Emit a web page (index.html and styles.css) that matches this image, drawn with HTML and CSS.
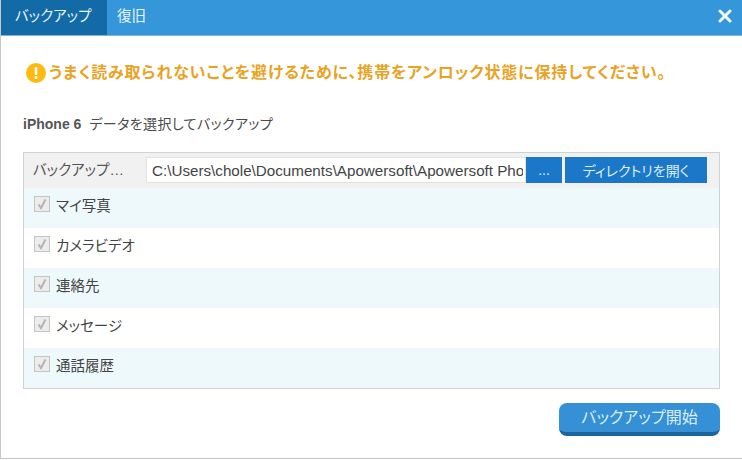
FILE: index.html
```html
<!DOCTYPE html>
<html lang="ja">

<head>
  <meta charset="UTF-8">
  <title>バックアップ</title>
  <link rel="stylesheet" href="styles.css">
</head>

<body>
  <div class="dialog">
    <header class="titlebar">
      <div class="tab tab-active">バックアップ</div>
      <div class="tab">復旧</div>
      <svg class="close" width="14" height="14" viewBox="0 0 14 14">
        <path d="M2 2L12 12M12 2L2 12" stroke="#eef7fd" stroke-width="3" stroke-linecap="round" />
      </svg>
    </header>

    <main class="content">
      <div class="warning">
        <svg class="warning-icon" width="20" height="20" viewBox="0 0 20 20">
          <circle cx="10" cy="10" r="10" fill="#fdbb12" />
          <rect x="8.7" y="4" width="2.6" height="8" rx="1.2" fill="#fff" />
          <circle cx="10" cy="14.6" r="1.5" fill="#fff" />
        </svg>
        <span class="warning-text">うまく読み取られないことを避けるために、携帯をアンロック状態に保持してください。</span>
      </div>

      <p class="subtitle"><b>iPhone 6</b><span class="subtitle-text">データを選択してバックアップ</span></p>

      <section class="panel">
        <div class="path-row">
          <span class="path-label">バックアップ…</span>
          <div class="path-input"><span class="path-text">C:\Users\chole\Documents\Apowersoft\Apowersoft Phone Manager\Backup</span></div>
          <button class="btn btn-browse">...</button>
          <button class="btn btn-open">ディレクトリを開く</button>
        </div>
        <label class="row"><span class="check"><svg width="12" height="12" viewBox="0 0 12 12"><path d="M2.5 6.5L5 10L9.5 1.5" /></svg></span>マイ写真</label>
        <label class="row"><span class="check"><svg width="12" height="12" viewBox="0 0 12 12"><path d="M2.5 6.5L5 10L9.5 1.5" /></svg></span>カメラビデオ</label>
        <label class="row"><span class="check"><svg width="12" height="12" viewBox="0 0 12 12"><path d="M2.5 6.5L5 10L9.5 1.5" /></svg></span>連絡先</label>
        <label class="row"><span class="check"><svg width="12" height="12" viewBox="0 0 12 12"><path d="M2.5 6.5L5 10L9.5 1.5" /></svg></span>メッセージ</label>
        <label class="row"><span class="check"><svg width="12" height="12" viewBox="0 0 12 12"><path d="M2.5 6.5L5 10L9.5 1.5" /></svg></span>通話履歴</label>
      </section>

      <div class="actions">
        <button class="btn-start">バックアップ開始</button>
      </div>
    </main>
  </div>
</body>

</html>
```

FILE: styles.css
```css
/* Global styles */
html,
body {
  margin: 0;
  padding: 0;
  height: 100%;
  overflow: hidden;
}

body {
  font-family: "Liberation Sans", "Noto Sans CJK JP", sans-serif;
  font-size: 15px;
  font-feature-settings: "palt";
  color: #444;
  background-color: #fff;
}

.dialog {
  height: 459px;
  box-sizing: border-box;
  border-left: 1px solid #c8c8c8;
  border-bottom: 1px solid #c4c4c4;
  display: flex;
  flex-direction: column;
}

/* Title bar */
.titlebar {
  height: 35px;
  flex: none;
  display: flex;
  align-items: stretch;
  background-color: #3596da;
  color: #e8f4fc;
  border-bottom: 1px solid #7fb3d8;
}

.tab {
  padding: 0 10px;
  line-height: 33px;
  font-size: 14.5px;
  white-space: nowrap;
}

.tab-active {
  width: 106px;
  padding: 0 0 0 14px;
  box-sizing: border-box;
  background-color: #126aa6;
}

.close {
  margin: 9px 10px 0 auto;
}

/* Content */
.content {
  flex: 1;
  padding: 27px 22px 0 22px;
  display: flex;
  flex-direction: column;
}

.warning {
  display: flex;
  align-items: center;
  gap: 3px;
  height: 20px;
  padding-left: 3px;
  font-size: 16px;
  font-weight: bold;
  letter-spacing: 0.85px;
  color: #e9a31f;
  white-space: nowrap;
}

.warning-text {
  padding-bottom: 4px;
}

.subtitle {
  margin: 31px 0 0 0;
  height: 20px;
  line-height: 20px;
  font-size: 14px;
  display: flex;
  gap: 8px;
  color: #4a4a4a;
}

.subtitle b {
  font-size: 14px;
  color: #555;
}

.subtitle-text {
  letter-spacing: 0.4px;
}

/* Panel */
.panel {
  margin-top: 18px;
  width: 697px;
  box-sizing: border-box;
  border: 1px solid #cfd3d5;
}

.path-row {
  height: 35px;
  box-sizing: border-box;
  display: flex;
  align-items: center;
  padding: 0 0 2px 9px;
  background-color: #f1f1f1;
}

.path-label {
  width: 113px;
  flex: none;
  padding-bottom: 2px;
  font-size: 14.5px;
  color: #555;
  white-space: nowrap;
}

.path-input {
  width: 380px;
  height: 26px;
  flex: none;
  box-sizing: border-box;
  padding: 0 2px 0 5px;
  line-height: 26px;
  font-size: 15.2px;
  background-color: #fff;
  border: 1px solid #e2e2e2;
  white-space: nowrap;
  color: #444;
}

.path-text {
  display: block;
  overflow: hidden;
}

.btn {
  height: 26px;
  padding: 0;
  border: none;
  background-color: #1b78c9;
  color: #dcecf8;
  font-family: inherit;
  font-feature-settings: inherit;
  font-size: 14px;
}

.btn-browse {
  width: 36px;
}

.btn-open {
  width: 142px;
  margin-left: 3px;
}

.row {
  height: 40px;
  box-sizing: border-box;
  display: flex;
  align-items: center;
  padding: 0 0 8px 10px;
  gap: 6px;
  font-size: 14.5px;
  color: #444;
}

.row:nth-child(even) {
  background-color: #edf9fb;
}

.row:nth-child(odd) {
  background-color: #fff;
}

.check {
  width: 16px;
  height: 16px;
  box-sizing: border-box;
  border: 1px solid #c4c4c4;
  background-color: #ececec;
  display: flex;
  align-items: center;
  justify-content: center;
}

.check path {
  fill: none;
  stroke: #b4b4b4;
  stroke-width: 2;
}

/* Start button */
.actions {
  display: flex;
  justify-content: flex-end;
  margin-top: 14px;
  width: 697px;
}

.btn-start {
  width: 161px;
  height: 33px;
  padding: 0 0 4px 0;
  border: none;
  border-radius: 8px;
  border-bottom: 4px solid #1c659c;
  background-color: #3590d6;
  color: #dcedf8;
  font-family: inherit;
  font-feature-settings: inherit;
  font-size: 16px;
}
```
